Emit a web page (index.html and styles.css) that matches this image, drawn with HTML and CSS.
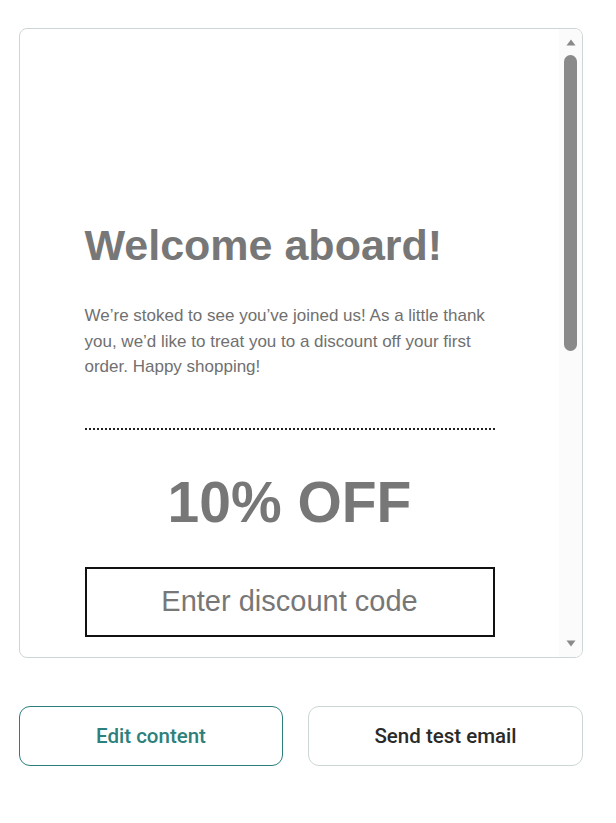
FILE: index.html
```html
<!DOCTYPE html>
<html lang="en">
<head>
<meta charset="utf-8">
<title>Welcome email preview</title>
<link rel="stylesheet" href="styles.css">
</head>
<body>
<div class="page">
  <div class="preview">
    <div class="viewport">
      <div class="email">
        <h1 class="email-title">Welcome aboard!</h1>
        <p class="email-text">We’re stoked to see you’ve joined us! As a little thank you, we’d like to treat you to a discount off your first order. Happy shopping!</p>
        <hr class="email-divider">
        <div class="email-offer">10% OFF</div>
        <div class="email-code">Enter discount code</div>
      </div>
    </div>
    <div class="scrollbar">
      <svg class="scroll-arrow" width="10" height="7" viewBox="0 0 10 7"><path d="M5 0.5 L9.5 6.5 H0.5 Z" fill="#8a8a8a"/></svg>
      <div class="scroll-track"><div class="scroll-thumb"></div></div>
      <svg class="scroll-arrow" width="10" height="7" viewBox="0 0 10 7"><path d="M0.5 0.5 H9.5 L5 6.5 Z" fill="#8a8a8a"/></svg>
    </div>
  </div>
  <div class="actions">
    <button class="btn btn-primary">Edit content</button>
    <button class="btn btn-secondary">Send test email</button>
  </div>
</div>
</body>
</html>
```
FILE: styles.css
```css
* { box-sizing: border-box; }

html, body {
  margin: 0;
  background: #ffffff;
}

.page {
  padding: 28px 33px 0 19px;
}

/* email preview frame */
.preview {
  display: flex;
  height: 630px;
  border: 1px solid #cdd6d6;
  border-radius: 8px;
  overflow: hidden;
  background: #ffffff;
}

.viewport {
  flex: 1;
  overflow: hidden;
}

.email {
  width: 410px;
  margin: 0 auto;
  padding-top: 188px;
  font-family: "Liberation Sans", Arial, sans-serif;
  color: #777777;
}

.email-title {
  margin: 0;
  font-size: 43px;
  font-weight: 700;
  line-height: 56px;
  color: #777777;
}

.email-text {
  margin: 30px 0 0;
  font-size: 17px;
  line-height: 25.5px;
  color: #707070;
}

.email-divider {
  margin: 48px 0 0;
  border: 0;
  border-top: 2px dotted #222222;
  height: 0;
}

.email-offer {
  margin-top: 37px;
  text-align: center;
  font-size: 57px;
  font-weight: 700;
  line-height: 70px;
  color: #777777;
}

.email-code {
  margin-top: 30px;
  height: 70px;
  border: 2px solid #111111;
  display: flex;
  align-items: center;
  justify-content: center;
  font-size: 29px;
  color: #777777;
}

/* scrollbar column */
.scrollbar {
  width: 23px;
  flex: none;
  background: #fbfbfb;
  display: flex;
  flex-direction: column;
  align-items: center;
  padding: 10px 0 10px;
}

.scroll-arrow {
  flex: none;
  display: block;
}

.scroll-track {
  flex: 1;
  width: 100%;
  display: flex;
  justify-content: center;
  padding-top: 9px;
}

.scroll-thumb {
  width: 13px;
  height: 296px;
  border-radius: 6.5px;
  background: #8a8a8a;
}

/* action buttons */
.actions {
  display: grid;
  grid-template-columns: 264fr 275fr;
  gap: 25px;
  margin-top: 48px;
}

.btn {
  height: 60px;
  border-radius: 11px;
  background: #ffffff;
  font-family: Roboto, "Noto Sans", sans-serif;
  font-size: 20.5px;
  font-weight: 500;
  cursor: pointer;
}

.btn-primary {
  border: 1px solid #2b7f7a;
  color: #2d807b;
}

.btn-secondary {
  border: 1px solid #cdd6d6;
  color: #2a2a2a;
}
```
